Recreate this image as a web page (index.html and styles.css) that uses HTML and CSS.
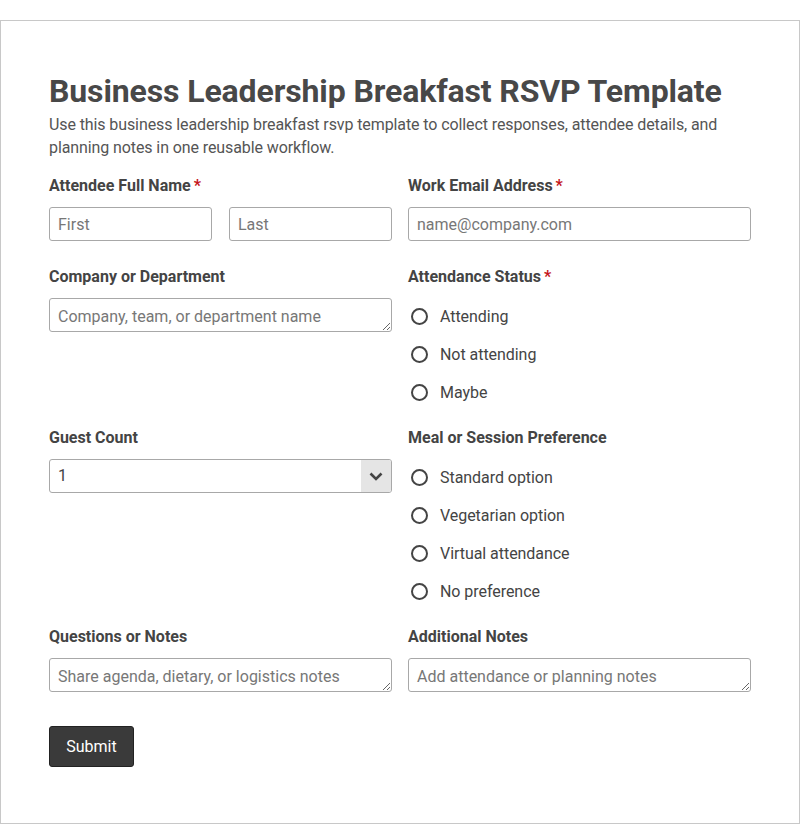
FILE: index.html
```html
<!DOCTYPE html>
<html lang="en">
<head>
    <meta charset="UTF-8">
    <meta name="viewport" content="width=device-width, initial-scale=1.0">
    <title>Business Leadership Breakfast RSVP Template</title>
    <link rel="stylesheet" href="styles.css">
</head>
<body>
    <form class="form-card" onsubmit="return false;">
        <h1>Business Leadership Breakfast RSVP Template</h1>
        <p class="intro">Use this business leadership breakfast rsvp template to collect responses, attendee details, and planning notes in one reusable workflow.</p>

        <div class="form-grid">
            <div class="field">
                <label class="field-label">Attendee Full Name<span class="req">*</span></label>
                <div class="name-pair">
                    <input type="text" placeholder="First">
                    <input type="text" placeholder="Last">
                </div>
            </div>
            <div class="field">
                <label class="field-label" for="email">Work Email Address<span class="req">*</span></label>
                <input type="email" id="email" placeholder="name@company.com">
            </div>

            <div class="field">
                <label class="field-label" for="company">Company or Department</label>
                <textarea id="company" rows="1" placeholder="Company, team, or department name"></textarea>
            </div>
            <div class="field">
                <span class="field-label">Attendance Status<span class="req">*</span></span>
                <div class="options">
                    <label class="option"><input type="radio" name="status"> Attending</label>
                    <label class="option"><input type="radio" name="status"> Not attending</label>
                    <label class="option"><input type="radio" name="status"> Maybe</label>
                </div>
            </div>

            <div class="field">
                <label class="field-label" for="guests">Guest Count</label>
                <div class="select-wrap">
                    <select id="guests">
                        <option>1</option>
                        <option>2</option>
                        <option>3</option>
                        <option>4</option>
                    </select>
                    <span class="select-arrow">
                        <svg width="14" height="9" viewBox="0 0 14 9"><path d="M1.5 1.5 L7 7 L12.5 1.5" fill="none" stroke="#444" stroke-width="2.6"/></svg>
                    </span>
                </div>
            </div>
            <div class="field">
                <span class="field-label">Meal or Session Preference</span>
                <div class="options">
                    <label class="option"><input type="radio" name="meal"> Standard option</label>
                    <label class="option"><input type="radio" name="meal"> Vegetarian option</label>
                    <label class="option"><input type="radio" name="meal"> Virtual attendance</label>
                    <label class="option"><input type="radio" name="meal"> No preference</label>
                </div>
            </div>

            <div class="field">
                <label class="field-label" for="questions">Questions or Notes</label>
                <textarea id="questions" rows="1" placeholder="Share agenda, dietary, or logistics notes"></textarea>
            </div>
            <div class="field">
                <label class="field-label" for="additional">Additional Notes</label>
                <textarea id="additional" rows="1" placeholder="Add attendance or planning notes"></textarea>
            </div>
        </div>

        <button type="submit" class="submit-btn">Submit</button>
    </form>
</body>
</html>
```

FILE: styles.css
```css
body {
    margin: 0;
    padding-top: 20px;
    font-family: Roboto, "Liberation Sans", Arial, sans-serif;
    color: #444;
    background: #fff;
}
.form-card {
    border: 1px solid #c8c8c8;
    padding: 50px 48px 56px;
}
h1 {
    margin: 0 0 1px;
    font-size: 32px;
    line-height: 41px;
    font-weight: 700;
    letter-spacing: -0.12px;
    color: #484848;
}
.intro {
    margin: 0 0 16px;
    font-size: 16px;
    line-height: 23px;
    letter-spacing: -0.1px;
    color: #555;
}
.form-grid {
    display: grid;
    grid-template-columns: 1fr 1fr;
    column-gap: 16px;
    row-gap: 25px;
}
.field-label {
    display: block;
    font-size: 16px;
    line-height: 22px;
    font-weight: 700;
    color: #444;
    margin-bottom: 10px;
}
.req {
    color: #c4161c;
    margin-left: 3px;
}
.name-pair {
    display: flex;
    gap: 17px;
}
input[type="text"], input[type="email"], textarea, select {
    box-sizing: border-box;
    width: 100%;
    height: 34px;
    padding: 6px 8px;
    border: 1px solid #a8a8a8;
    border-radius: 3px;
    font-family: inherit;
    font-size: 16px;
    line-height: 20px;
    color: #444;
    background: #fff;
}
textarea {
    display: block;
    padding-top: 8px;
    padding-bottom: 4px;
    resize: vertical;
    overflow: hidden;
}
::placeholder {
    color: #777;
}
.options {
    display: flex;
    flex-direction: column;
    gap: 18px;
    padding-top: 8px;
}
.option {
    display: flex;
    align-items: center;
    height: 20px;
    font-size: 16px;
    letter-spacing: -0.05px;
    color: #444;
}
.option input {
    appearance: none;
    -webkit-appearance: none;
    box-sizing: border-box;
    width: 17px;
    height: 17px;
    margin: 0 12px 0 3px;
    border: 2px solid #444;
    border-radius: 50%;
    background: #fff;
}
.select-wrap {
    position: relative;
}
select {
    appearance: none;
    -webkit-appearance: none;
    padding-left: 8px;
}
.select-arrow {
    position: absolute;
    top: 1px;
    right: 1px;
    bottom: 1px;
    width: 30px;
    background: #e5e5e5;
    border-radius: 0 2px 2px 0;
    display: flex;
    align-items: center;
    justify-content: center;
    pointer-events: none;
}
.submit-btn {
    margin-top: 34px;
    width: 85px;
    height: 41px;
    padding: 0;
    background: #3a3a3a;
    color: #fff;
    border: 1px solid #222;
    border-radius: 3px;
    font-family: inherit;
    font-size: 16px;
    cursor: pointer;
}
```
